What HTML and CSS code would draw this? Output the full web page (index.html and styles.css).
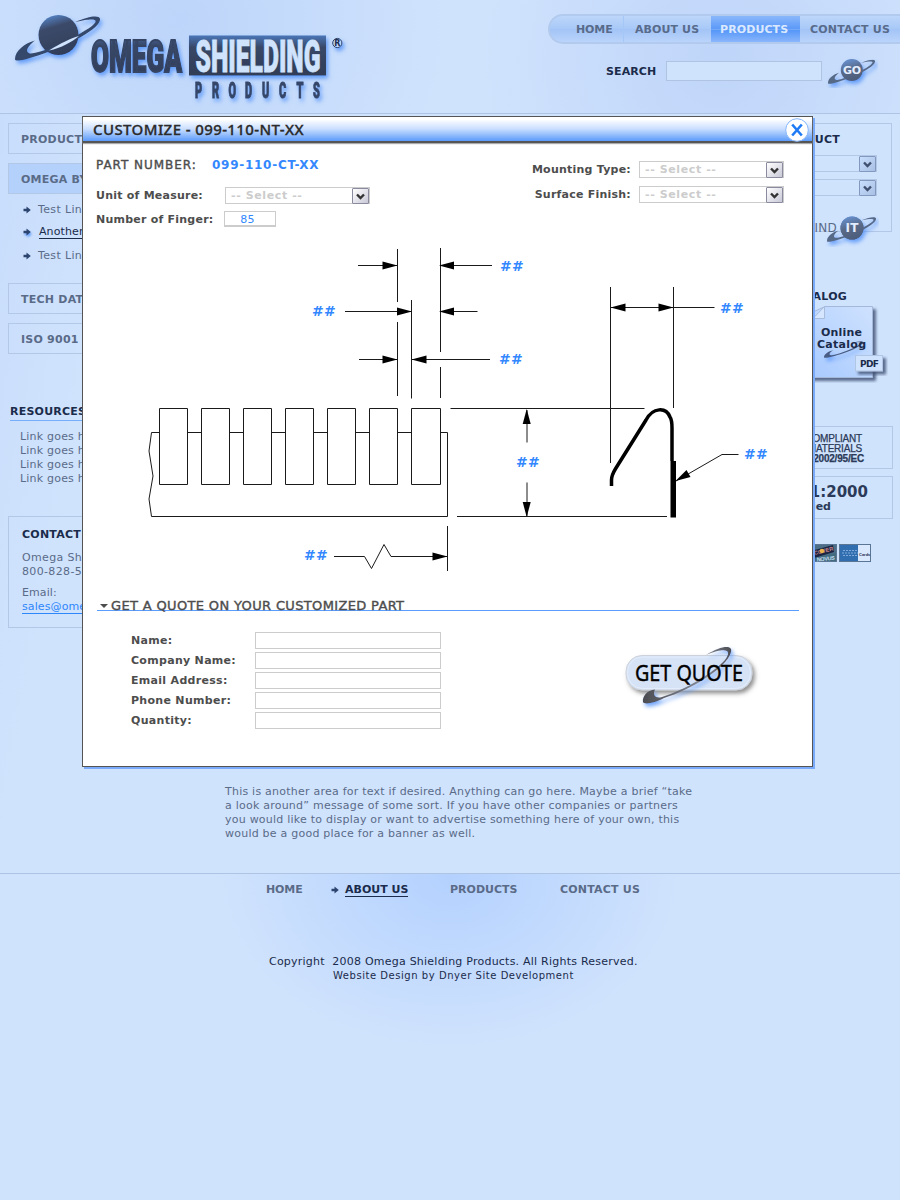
FILE: index.html
```html
<!DOCTYPE html>
<html lang="en">
<head>
<meta charset="utf-8">
<title>Omega Shielding Products</title>
<link rel="stylesheet" href="styles.css">
</head>
<body>
<svg class="defs" width="0" height="0" aria-hidden="true">
  <defs>
    <linearGradient id="steel" x1="0" y1="0" x2="0" y2="1"><stop offset="0" stop-color="#4a76b8"/><stop offset=".3" stop-color="#384766"/><stop offset="1" stop-color="#303c57"/></linearGradient>
    <linearGradient id="orb" x1=".3" y1="0" x2=".6" y2="1"><stop offset="0" stop-color="#5584c8"/><stop offset=".3" stop-color="#3c4a69"/><stop offset="1" stop-color="#303d5a"/></linearGradient>
    <linearGradient id="orb-soft" x1=".3" y1="0" x2=".6" y2="1"><stop offset="0" stop-color="#6690cf"/><stop offset=".5" stop-color="#586885"/><stop offset="1" stop-color="#4c5d7c"/></linearGradient>
    <filter id="glow" x="-20%" y="-20%" width="150%" height="160%"><feDropShadow dx="2" dy="3" stdDeviation="2" flood-color="#4a8cf8" flood-opacity=".8"/></filter>
    <symbol id="ring" viewBox="15 16 85 45" preserveAspectRatio="none">
      <path d="M15 59C15 51 25 43 35 40.500C28 46 24 52 30 53.500C40 54 74 39 92 26C99 20 97 17 75 22C90 15.500 101 14.500 100 20C98 31 60 50 25 59.500C18 61 15 61 15 59Z"/>
    </symbol>
    <symbol id="arrow" viewBox="0 0 8 8"><path d="M.5 2.700H3.500V.5L7.800 4L3.500 7.500V5.300H.5Z"/></symbol>
  </defs>
</svg>
<div class="page">
  <header class="top">
    <svg class="logo" width="360" height="113" viewBox="0 0 360 113" role="img" aria-label="Omega Shielding Products">
      <g filter="url(#glow)">
        <circle cx="58.500" cy="35" r="20" fill="url(#orb)"/>
        <use href="#ring" x="15" y="16" width="85" height="45" fill="#36486c"/>
        <path d="M49 50.500C61 48 72 42 79 36C70 38.500 61 43 49 50.500Z" fill="#d0e3fd"/>
        <text x="91" y="72" class="logo-name dark" textLength="91" lengthAdjust="spacingAndGlyphs" fill="url(#steel)" stroke="#364463">OMEGA</text>
        <rect x="189" y="35.500" width="137" height="40" fill="url(#steel)"/>
        <g transform="scale(.5 1)"><text y="98" class="logo-sub" x="390 424 457 490 524 558 593 626">PRODUCTS</text></g>
        <circle cx="337.300" cy="43" r="4.600" fill="#b9d6ff" stroke="#2f3f60"/>
      </g>
      <text x="334.200" y="46" class="reg">R</text>
      <text x="195.500" y="72" class="logo-name" textLength="125" lengthAdjust="spacingAndGlyphs" fill="#d0e3fd" stroke="#d0e3fd">SHIELDING</text>
    </svg>
    <div class="top-right">
      <nav class="tabs">
        <a class="tab t1">HOME</a><a class="tab t2">ABOUT US</a><a class="tab t3 on">PRODUCTS</a><a class="tab t4">CONTACT US</a>
      </nav>
      <div class="search">
        <span>SEARCH</span><i class="search-field"></i>
        <svg class="go" width="52" height="34" viewBox="826 54 52 34">
          <g filter="url(#glow)"><circle cx="851.800" cy="70" r="11" fill="url(#orb-soft)"/><use href="#ring" x="828" y="59.500" width="47" height="24.500" fill="#566987"/></g>
          <circle cx="851.800" cy="70" r="10.500" fill="url(#orb-soft)"/>
          <text x="843" y="74" class="orb-text" textLength="18">GO</text>
        </svg>
      </div>
    </div>
  </header>

  <main class="middle">
    <aside class="left">
      <a class="box">PRODUCTS</a>
      <a class="box active">OMEGA BY</a>
      <ul class="sub">
        <li><svg class="arr" width="8" height="8"><use href="#arrow"/></svg>Test Link</li>
        <li class="cur"><svg class="arr lit" width="8" height="8"><use href="#arrow"/></svg><u>Another</u></li>
        <li><svg class="arr" width="8" height="8"><use href="#arrow"/></svg>Test Link</li>
      </ul>
      <a class="box">TECH DATA</a>
      <a class="box">ISO 9001</a>
      <h3 class="res-title">RESOURCES</h3>
      <div class="res">Link goes here<br>Link goes here<br>Link goes here<br>Link goes here</div>
      <section class="contact">
        <h3>CONTACT</h3>
        <p>Omega Shi<br>800-828-5</p>
        <p>Email:<br><a class="mail">sales@omega</a></p>
      </section>
    </aside>

    <p class="blurb">This is another area for text if desired. Anything can go here. Maybe a brief “take<br>a look around” message of some sort. If you have other companies or partners<br>you would like to display or want to advertise something here of your own, this<br>would be a good place for a banner as well.</p>

    <aside class="right">
      <section class="find">
        <h3>PRODUCT</h3>
        <div class="pick tint"><span></span><b class="drop"><svg width="11" height="9"><path d="M2 2.500L5.500 6L9 2.500"/></svg></b></div>
        <div class="pick tint"><span></span><b class="drop"><svg width="11" height="9"><path d="M2 2.500L5.500 6L9 2.500"/></svg></b></div>
        <div class="find-it"><span>FIND</span>
          <svg width="54" height="36" viewBox="825 210 54 36">
            <g filter="url(#glow)"><circle cx="852" cy="227" r="11.500" fill="url(#orb-soft)"/><use href="#ring" x="827" y="216" width="49" height="25" fill="#566987"/></g>
            <circle cx="852" cy="227" r="11.500" fill="url(#orb-soft)"/>
            <text x="845.500" y="231" class="orb-text it" textLength="13">IT</text>
          </svg>
        </div>
      </section>
      <h3 class="cat-title">CATALOG</h3>
      <div class="doc">
        <svg width="78" height="80" viewBox="810 302 78 80">
          <defs><linearGradient id="paper" x1="1" y1="0" x2="0" y2="1"><stop offset="0" stop-color="#cfe2fe"/><stop offset="1" stop-color="#a5c8ff"/></linearGradient>
          <filter id="shade" x="-20%" y="-20%" width="150%" height="150%"><feDropShadow dx="3" dy="3" stdDeviation="1.500" flood-color="#3b4d70" flood-opacity=".8"/></filter></defs>
          <path d="M825 305.500H872.500V376.500H800V317Z" fill="url(#paper)" stroke="#a4b9da" filter="url(#shade)"/>
          <path d="M824.500 305.500V317.500H813Z" fill="#d5e6fe" stroke="#a9bcdb"/>
          <use href="#ring" x="824" y="340" width="39" height="17" fill="#4a5d84" filter="url(#glow)"/>
          <text x="821" y="335" textLength="41">Online</text>
          <text x="817" y="347" textLength="49">Catalog</text>
          <rect x="855.500" y="354.500" width="27" height="15.500" fill="#cfe2fe" stroke="#b1c5e4" filter="url(#shade)"/>
          <text x="860" y="366" class="pdf" textLength="19">PDF</text>
        </svg>
      </div>
      <div class="badge rohs"><span>COMPLIANT</span><span>MATERIALS</span><b>2002/95/EC</b></div>
      <div class="badge iso"><b>9001:2000</b><span>Certified</span></div>
      <svg class="cards" width="61" height="19" viewBox="811 544 61 19">
        <rect x="800" y="544.500" width="36.500" height="17" fill="#4c6f87" stroke="#5b7594"/>
        <path d="M811 551L833 545L834 552L811 559Z" fill="#1c2542"/>
        <path d="M811 559L836 553V561H811Z" fill="#416c80"/>
        <text transform="translate(811 556) rotate(-14)" class="card-a">SCOVER</text>
        <circle cx="822" cy="551" r="2.300" fill="#e9b24c"/>
        <text transform="translate(817 561.500) rotate(-6)" class="card-b" textLength="18">NOVUS</text>
        <rect x="839.500" y="544.500" width="31" height="17" fill="#d9e8fd" stroke="#5b7594"/>
        <rect x="840" y="545" width="18" height="16" fill="#316eb0"/>
        <path d="M843 550.500H857M842 553H858M843 555.500H857" stroke="#7fa9da" stroke-dasharray="2 1"/>
        <text x="859" y="556" class="card-c">Cards</text>
      </svg>
    </aside>
  </main>

  <footer class="bottom">
    <nav><a class="f1">HOME</a><svg class="arr" width="8" height="8"><use href="#arrow"/></svg><a class="f2">ABOUT US</a><a class="f3">PRODUCTS</a><a class="f4">CONTACT US</a></nav>
    <p class="c1">Copyright&nbsp; 2008 Omega Shielding Products. All Rights Reserved.</p>
    <p class="c2">Website Design by Dnyer Site Development</p>
  </footer>

  <div class="modal" role="dialog">
    <div class="bar"><h2>CUSTOMIZE - 099-110-NT-XX</h2>
      <svg class="close" width="24" height="24"><circle cx="12" cy="12" r="11.300"/><path d="M7.200 6.500L16.800 17.500M16.800 6.500L7.200 17.500"/></svg>
    </div>
    <div class="options">
      <div class="opt-left">
        <div class="row part"><span>PART NUMBER:</span><b>099-110-CT-XX</b></div>
        <div class="row unit"><label>Unit of Measure:</label><div class="pick"><span>-- Select --</span><b class="drop"><svg width="11" height="9"><path d="M2 2.500L5.500 6L9 2.500"/></svg></b></div></div>
        <div class="row count"><label>Number of Finger:</label><i class="num">85</i></div>
      </div>
      <div class="opt-right">
        <div class="row"><label>Mounting Type:</label><div class="pick"><span>-- Select --</span><b class="drop"><svg width="11" height="9"><path d="M2 2.500L5.500 6L9 2.500"/></svg></b></div></div>
        <div class="row"><label class="low">Surface Finish:</label><div class="pick"><span>-- Select --</span><b class="drop"><svg width="11" height="9"><path d="M2 2.500L5.500 6L9 2.500"/></svg></b></div></div>
      </div>
    </div>
    <svg class="drawing" width="729" height="350" viewBox="83 236 729 350">
      <defs><path id="tip" d="M0 0L-15 -4V4Z"/></defs>
      <g class="ln">
        <path d="M397.500 249V302M397.500 322V396M440.500 248V352M440.500 367V398M411.500 300V398.500"/>
        <path d="M358 265.500H397M440 265.500H492M345 311.500H412M440 311.500H477.500M359 359.500H397M412 359.500H490"/>
        <path d="M159.500 408.500H187.500V484.500H159.500ZM201.500 408.500H229.500V484.500H201.500ZM243.500 408.500H271.500V484.500H243.500ZM285.500 408.500H313.500V484.500H285.500ZM327.500 408.500H355.500V484.500H327.500ZM369.500 408.500H397.500V484.500H369.500ZM411.500 408.500H440.500V484.500H411.500Z"/>
        <path d="M159 432.500H151.500L149 451L153 476L149 499L151.500 516.500H447.500V432.500H441M188 432.500H201M230 432.500H243M272 432.500H285M314 432.500H327M356 432.500H369M398 432.500H411"/>
        <path d="M450.500 408.500H644.500M457 516.500H667M527 410V442.500M527 482.500V516"/>
        <path d="M447.500 526V571M334 556.500H364.500L371.500 568.500L384 544.500L391 556.500H447"/>
        <path d="M610.500 287V463M673.500 287V408M611 307.500H714.500M676 481L722 454.500H738.500"/>
      </g>
      <g class="tips">
        <use href="#tip" x="397.500" y="265.500"/><use href="#tip" x="412" y="311.500"/><use href="#tip" x="397.500" y="359.500"/><use href="#tip" x="447.500" y="556.500"/><use href="#tip" x="673.500" y="307.500"/>
        <use href="#tip" transform="translate(439 265.500) rotate(180)"/><use href="#tip" transform="translate(439 311.500) rotate(180)"/><use href="#tip" transform="translate(411.500 359.500) rotate(180)"/><use href="#tip" transform="translate(610.500 307.500) rotate(180)"/>
        <use href="#tip" transform="translate(526.700 409) rotate(-90)"/><use href="#tip" transform="translate(526.700 517) rotate(90)"/><use href="#tip" transform="translate(675.500 481) rotate(150)"/>
      </g>
      <path class="clip" d="M611.500 486V480C611.500 475 613 473 616 468L646 420C653 407 666 407 670 417C672 420 672 424 672 428V461"/>
      <path d="M670.500 461H676V517.500H670.500Z"/>
      <g class="dim"><text x="500" y="270.500">##</text><text x="312" y="315.500">##</text><text x="499" y="363.500">##</text><text x="516" y="466.500">##</text><text x="304" y="560">##</text><text x="720" y="312.500">##</text><text x="744" y="458.500">##</text></g>
    </svg>
    <h3 class="quote-title"><i></i><span>GET A QUOTE ON YOUR CUSTOMIZED PART</span></h3>
    <div class="quote">
      <div class="fields">
        <div class="row"><label>Name:</label><i></i></div>
        <div class="row"><label>Company Name:</label><i></i></div>
        <div class="row"><label>Email Address:</label><i></i></div>
        <div class="row"><label>Phone Number:</label><i></i></div>
        <div class="row"><label>Quantity:</label><i></i></div>
      </div>
      <svg class="get" width="144" height="72" viewBox="620 640 144 72">
        <defs><filter id="soft" x="-10%" y="-20%" width="125%" height="160%"><feDropShadow dx="2.500" dy="3" stdDeviation="2" flood-color="#555" flood-opacity=".65"/></filter>
        <linearGradient id="rg" x1="0" y1="0" x2="1" y2="0"><stop offset="0" stop-color="#4c4c52"/><stop offset=".7" stop-color="#858b98"/><stop offset="1" stop-color="#4c4c52"/></linearGradient></defs>
        <rect x="626" y="655.500" width="126" height="34.500" rx="16" fill="#d6e3f7" stroke="#cdd2da" filter="url(#soft)"/>
        <rect x="627.500" y="657" width="123" height="31.500" rx="15" fill="none" stroke="#e3edfb" stroke-width="1"/>
        <path d="M643 702C642 697 647 690 655 689.500C652 695 656 699 662 697C685 690 713 673 725 660C732 651 728 646 706 655C722 645 733 645 731 652C727 668 690 690 664 698C655 703 644 705 643 702Z" fill="url(#rg)" filter="url(#glow)"/>
        <text x="635" y="681" textLength="108" lengthAdjust="spacingAndGlyphs">GET QUOTE</text>
      </svg>
    </div>
  </div>
</div>
</body>
</html>
```
FILE: styles.css
```css
* { box-sizing: border-box; }
body { margin: 0; background: #d0e3fd; font: 11px/14px "DejaVu Sans", Verdana, sans-serif; letter-spacing: .23px; color: #5a6b88; }
h2, h3, p, ul { margin: 0; padding: 0; }
h3 { font-size: 11px; line-height: 14px; color: #1a2b4b; }
i { font-style: normal; }
svg { letter-spacing: 0; }
.defs { display: block; height: 0; }
.page { position: relative; width: 900px; height: 1200px; overflow: hidden; display: flex; flex-direction: column; }

.top { height: 114px; flex: none; display: flex; justify-content: space-between; border-bottom: 1px solid #afc4e4; background: radial-gradient(circle at 180px 20px, #bdd5fa, rgba(208,227,253,0) 270px), radial-gradient(circle at 720px 60px, #bfd5f9, rgba(208,227,253,0) 240px), #d0e3fd; }
.logo { display: block; }
.logo-name { font: 900 45px Roboto, sans-serif; stroke-width: .8px; }
.logo-name.dark { stroke-width: 2px; }
.logo-sub { font: 900 22px Roboto, sans-serif; fill: #364668; stroke: #364668; stroke-width: 1px; }
.reg { font: bold 8px "DejaVu Sans", sans-serif; fill: #1f2f50; }
.top-right { width: 352px; padding-top: 14px; }
.tabs { height: 30px; display: flex; border: 2px solid #b2caee; border-right: 0; border-radius: 16px 0 0 16px; background: linear-gradient(#bdd6fa, #a8c9f7 48%, #a3c4f6 52%, #bad4fb); font-weight: bold; line-height: 28px; letter-spacing: .1px; color: #586b8b; white-space: nowrap; }
.tab { display: block; height: 26px; }
.t1 { width: 74px; padding-left: 26px; border-right: 1px solid #a5c7f7; letter-spacing: -.1px; }
.t2 { width: 87px; padding-left: 11px; }
.t3 { width: 89px; padding-left: 9px; }
.t4 { padding-left: 10px; letter-spacing: .2px; }
.on { color: #dbe9ff; background: linear-gradient(#8ab7fb, #5c9af8 48%, #8fb9fa 50%, #5596f8 54%, #8ab6fb); }
.search { display: flex; align-items: center; height: 34px; margin-top: 10px; padding-left: 58px; font-weight: bold; letter-spacing: .1px; color: #1a2b4b; }
.search span { width: 60px; padding-top: 2px; }
.search-field { width: 156px; height: 20px; border: 1px solid #afc4e3; background: #d0e3fd; }
.go { margin-left: 4px; }
.orb-text { font: bold 11px "DejaVu Sans", sans-serif; fill: #e3edff; }
.orb-text.it { font-size: 12px; }

.middle { flex: none; height: 759px; display: grid; grid-template-columns: 200px 493px 158px; column-gap: 17px; padding: 9px 7px 0 8px; background: linear-gradient(100deg, rgba(190,214,250,.45), rgba(208,227,253,0) 130px); }
.box { display: block; height: 31px; margin-bottom: 9px; padding-left: 12px; border: 1px solid #b3c7e6; font-weight: bold; line-height: 31px; }
.box.active { background: #b4d1fb; }
.sub { list-style: none; height: 89px; padding: 5px 0 0 15px; margin-top: -9px; letter-spacing: .35px; }
.sub li { height: 22px; display: flex; align-items: center; gap: 7px; }
.sub li:last-child { height: 26px; }
.cur { color: #1a2b4b; letter-spacing: .1px; }
.cur u { margin-left: 1px; text-decoration: none; border-bottom: 1px solid #1a2b4b; line-height: 12px; }
.arr { fill: #2c4470; }
.arr.lit { filter: drop-shadow(1px 2px 1px #5c9bff); }
.res-title { margin: 50px 0 0 2px; height: 17px; line-height: 16px; border-bottom: 1px solid #76aefb; }
.res { margin: 9px 0 0 12px; letter-spacing: .2px; }
.contact { margin-top: 30px; height: 112px; padding: 11px 0 0 13px; border: 1px solid #b3c7e6; }
.contact p { margin-top: 9px; letter-spacing: .35px; }
.contact p + p { margin-top: 7px; letter-spacing: .1px; }
.mail { color: #2e86fb; border-bottom: 1px solid #2e86fb; line-height: 12px; }
.blurb { align-self: end; padding-bottom: 32px; white-space: nowrap; }

.right { text-align: right; }
.find { height: 109px; border: 1px solid #b3c7e6; padding: 9px 14px 0 0; margin-right: 1px; }
.find h3 { padding-right: 37px; margin-bottom: 8px; }
.find .pick { margin: 0 0 7px; }
.find-it { display: flex; justify-content: flex-end; align-items: center; margin: 15px -2px 0 0; font-size: 12px; }
.find-it span { margin: -2px -12px 0 0; }
.cat-title { margin-top: 58px; padding-right: 46px; }
.doc { height: 80px; margin: -1px 5px 0 0; }
.doc text { font: bold 11px "DejaVu Sans", sans-serif; fill: #1a2b4b; }
.doc .pdf { font-size: 9px; }
.badge { height: 43px; border: 1px solid #b3c7e6; color: #2b3a58; display: flex; flex-direction: column; }
.rohs { margin-top: 43px; padding: 7px 28px 0 0; font: 10px/10px "Liberation Sans", Arial, sans-serif; letter-spacing: -.2px; -webkit-text-stroke: .25px; }
.rohs span { padding-right: 2px; line-height: 9.500px; }
.rohs b { line-height: 12px; }
.iso { margin-top: 7px; padding: 7px 24px 0 0; letter-spacing: 0; }
.iso b { font-size: 15px; line-height: 16px; }
.iso span { font-weight: bold; padding-right: 37px; line-height: 13px; }
.cards { margin: 25px 21px 0 0; }
.card-a { font: bold 5.500px "Liberation Sans", sans-serif; fill: #c98791; }
.card-b { font: bold 5.500px "Liberation Sans", sans-serif; fill: #c6dff0; }
.card-c { font: bold 4px "Liberation Sans", sans-serif; fill: #1a2b4b; }

.bottom { flex: 1; border-top: 1px solid #afc4e4; background: radial-gradient(ellipse 230px 170px at 450px 5px, #b4d1fe, rgba(208,227,253,0)); color: #1a2b4b; }
.bottom nav { display: flex; align-items: center; height: 14px; margin-top: 9px; padding-left: 266px; font-weight: bold; letter-spacing: 0; color: #5a6b88; white-space: nowrap; }
.f1 { width: 65px; letter-spacing: -.1px; }
.f2 { width: 63px; margin: 0 42px 0 6px; color: #1a2b4b; border-bottom: 1px solid #1a2b4b; line-height: 12px; }
.f3 { width: 110px; }
.f4 { letter-spacing: .2px; }
.c1 { margin: 58px 0 0 269px; }
.c2 { margin-left: 333px; font-size: 10px; letter-spacing: .54px; }

.modal { position: absolute; left: 82px; top: 116px; width: 731px; height: 651px; border: 1px solid #555; background: #fff; box-shadow: 2px 2px 0 #7aabfb; color: #4d4d4d; display: flex; flex-direction: column; }
.bar { flex: none; height: 26px; display: flex; justify-content: space-between; align-items: center; padding: 0 3px 0 10px; border-bottom: 2px solid #555; background: linear-gradient(#fff 10%, #c9deff 50%, #5c9bfa); box-shadow: 0 1px 1px #aaa; }
.bar h2 { font: 500 15px/20px "Noto Sans", sans-serif; letter-spacing: .4px; color: #2b2b2b; -webkit-text-stroke: .3px; }
.close { margin-top: 2px; position: relative; }
.close circle { fill: #fff; stroke: #86b6fb; }
.close path { fill: none; stroke: #1e7bf5; stroke-width: 2.600px; }
.options { flex: none; height: 93px; display: flex; justify-content: space-between; padding: 7px 28px 0 13px; font-weight: bold; }
.row { display: flex; align-items: center; white-space: nowrap; }
.part { height: 29px; font-size: 12px; }
.part span { width: 116px; font-weight: normal; -webkit-text-stroke: .4px; letter-spacing: .95px; }
.part b { color: #3388ff; letter-spacing: .73px; }
.unit { height: 32px; }
.unit label { width: 129px; padding-top: 1px; }
.count { height: 16px; }
.count label { width: 128px; padding-top: 1px; }
.num { width: 52px; height: 16px; border: 1px solid #ccc; border-bottom-width: 2px; color: #3388ff; text-align: center; font-weight: normal; line-height: 15px; padding-right: 5px; }
.opt-right { padding-top: 11px; }
.opt-right .row { height: 17px; justify-content: flex-end; margin-bottom: 8px; gap: 8px; }
.low { padding-top: 1px; }
.pick { width: 145px; height: 17px; display: flex; justify-content: space-between; border: 1px solid #ccc; color: #ccc; line-height: 16px; letter-spacing: .6px; padding-left: 5px; }
.drop { display: block; width: 17px; height: 16px; border: 1px solid #8b8ba0; border-radius: 1px; background: linear-gradient(135deg, #fff, #c9c9d8); }
.drop svg { display: block; margin: 3px 0 0 2px; }
.drop path { fill: none; stroke: #333; stroke-width: 2.400px; }
.tint { width: auto; border-color: #b3c7e6; }
.tint .drop { background: linear-gradient(135deg, #c9defd, #a9c0e5); border-color: #8398be; }
.tint .drop path { stroke: #40506f; }
.drawing { flex: none; display: block; }
.ln { fill: none; stroke: #1a1a1a; stroke-width: 1px; }
.clip { fill: none; stroke: #000; stroke-width: 3.500px; }
.dim { font: bold 14px "DejaVu Sans", sans-serif; letter-spacing: .2px; fill: #3388ff; }
.quote-title { flex: none; display: flex; align-items: center; height: 11px; margin: 14px 13px 0 14px; border-bottom: 1px solid #5b9dff; font-size: 13px; font-weight: normal; letter-spacing: .35px; color: #4d4d4d; -webkit-text-stroke: .4px; white-space: nowrap; }
.quote-title i { border: 4px solid transparent; border-top-color: #4d4d4d; border-bottom: 0; margin: 1px 3px 0 3px; }
.quote-title span { padding-top: 1px; }
.quote { display: flex; padding-left: 48px; }
.fields { padding-top: 21px; width: 489px; font-weight: bold; letter-spacing: .3px; }
.fields .row { height: 17px; margin-bottom: 3px; }
.fields label { width: 124px; }
.fields .row i { width: 186px; height: 17px; border: 1px solid #ccc; }
.get { margin-top: 29px; }
.get text { font: 21px "Noto Sans", sans-serif; fill: #000; stroke: #000; stroke-width: .4px; }
```
